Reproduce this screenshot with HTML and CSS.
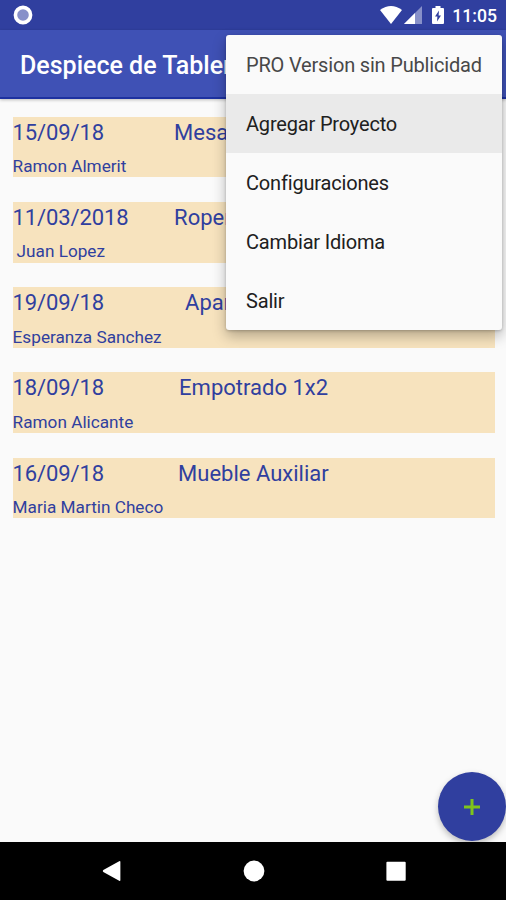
FILE: index.html
```html
<!DOCTYPE html>
<html lang="es">
<head>
<meta charset="utf-8">
<title>Despiece de Tableros</title>
<link rel="stylesheet" href="styles.css">
</head>
<body>
<div class="screen">
  <header class="status-bar">
    <svg class="sync" viewBox="0 0 20 20"><circle cx="10" cy="10" r="7.6" fill="#8790c9" stroke="#fff" stroke-width="3.6"/></svg>
    <div class="indicators">
      <svg class="wifi" viewBox="0 0 22 18"><path d="M0 4Q11-4 22 4L11 18Z" fill="#fff"/></svg>
      <svg class="signal" viewBox="0 0 18 18"><path d="M0 18L18 0V18Z" fill="#8790c9"/><path d="M0 18L11 7V18Z" fill="#fff"/></svg>
      <svg class="battery" viewBox="0 0 12 18"><path d="M3.5 2V0h5v2H11q1 0 1 1v14q0 1-1 1H1q-1 0-1-1V3q0-1 1-1Z" fill="#fff"/><path d="M7 4.5L3 10.6h2.4L5 15.5l4-6H6.6Z" fill="#303f9f"/></svg>
      <span class="clock">11:05</span>
    </div>
  </header>
  <div class="app-bar"><h1>Despiece de Tabler</h1></div>
  <main class="projects">
    <article class="project"><div class="row"><span class="date">15/09/18</span><span class="name name-mesa">Mesa</span></div><p class="client">Ramon Almerit</p></article>
    <article class="project"><div class="row"><span class="date">11/03/2018</span><span class="name name-ropero">Roper</span></div><p class="client indented">Juan Lopez</p></article>
    <article class="project"><div class="row"><span class="date">19/09/18</span><span class="name name-aparador">Apar</span></div><p class="client">Esperanza Sanchez</p></article>
    <article class="project"><div class="row"><span class="date">18/09/18</span><span class="name name-empotrado">Empotrado 1x2</span></div><p class="client">Ramon Alicante</p></article>
    <article class="project"><div class="row"><span class="date">16/09/18</span><span class="name name-mueble">Mueble Auxiliar</span></div><p class="client">Maria Martin Checo</p></article>
  </main>
  <nav class="nav-bar">
    <svg viewBox="0 0 22 22"><path d="M18.2 1.2Q19.4.6 19.4 2V20Q19.4 21.4 18.2 20.8L2.3 11.9Q1.2 11 2.3 10.1Z" fill="#fff"/></svg>
    <svg viewBox="0 0 22 22"><circle cx="11" cy="11" r="10.4" fill="#fff"/></svg>
    <svg viewBox="0 0 22 22"><rect x="1.4" y="1.7" width="19.3" height="19" rx="1" fill="#fff"/></svg>
  </nav>
  <button class="fab" aria-label="Agregar"><svg viewBox="0 0 16 16"><path d="M8 0V16M0 8H16" stroke="#7fc51c" stroke-width="3"/></svg></button>
  <ul class="menu">
    <li class="pro">PRO Version sin Publicidad</li>
    <li class="active">Agregar Proyecto</li>
    <li>Configuraciones</li>
    <li>Cambiar Idioma</li>
    <li>Salir</li>
  </ul>
</div>
</body>
</html>
```
FILE: styles.css
```css
* { box-sizing: border-box; }
body { margin: 0; font-family: Roboto, sans-serif; }
h1, p, ul { margin: 0; padding: 0; }
.screen {
  position: relative;
  display: flex;
  flex-direction: column;
  width: 506px;
  height: 900px;
  overflow: hidden;
  background: #fafafa;
}
.status-bar {
  display: flex;
  align-items: center;
  justify-content: space-between;
  height: 30px;
  padding: 0 9px 0 13px;
  background: #303f9f;
}
.sync { width: 20px; height: 20px; }
.indicators { display: flex; align-items: center; }
.wifi { width: 22px; height: 18px; margin-right: 2px; }
.signal { width: 18px; height: 18px; margin-right: 10px; }
.battery { width: 12px; height: 18px; margin-right: 8px; }
.clock { padding-top: 2px; color: #fff; font-size: 17.6px; font-weight: 500; line-height: 24px; }
.app-bar {
  display: flex;
  align-items: center;
  height: 69px;
  padding: 4px 0 0 20px;
  background: #3f51b5;
  border-bottom: 2px solid #1d31a0;
  box-shadow: 0 1px 3px rgba(0, 0, 0, .25);
}
.app-bar h1 { color: #fff; font-size: 25px; font-weight: 500; line-height: 32px; white-space: nowrap; }
.projects {
  display: flex;
  flex: 1;
  flex-direction: column;
  gap: 24.6px;
  padding: 17.6px 11.5px 0 12.6px;
}
.project { height: 60.7px; background: #f7e3be; color: #303f9f; }
.row { display: flex; height: 32px; font-size: 22px; line-height: 31px; }
.date { flex: none; width: 140.5px; letter-spacing: -.12px; }
.name { white-space: nowrap; }
.name-mesa, .name-ropero { margin-left: 21px; }
.name-aparador { margin-left: 32px; }
.name-empotrado { margin-left: 26px; }
.name-mueble { margin-left: 25px; }
.client { padding-top: 6.4px; font-size: 17.2px; line-height: 22px; }
.indented { padding-left: 4px; }
.nav-bar {
  display: flex;
  align-items: center;
  justify-content: center;
  gap: 120px;
  height: 58px;
  padding-left: 1px;
  background: #000;
}
.nav-bar svg { width: 22px; height: 22px; }
.fab {
  position: absolute;
  top: 772px;
  right: 0;
  display: flex;
  align-items: center;
  justify-content: center;
  width: 68px;
  height: 69px;
  padding: 0;
  border: 0;
  border-radius: 50%;
  background: #303f9f;
  box-shadow: 0 3px 6px rgba(0, 0, 0, .25);
}
.fab svg { width: 16px; height: 16px; }
.menu {
  position: absolute;
  top: 34.5px;
  left: 226px;
  width: 276px;
  overflow: hidden;
  border-radius: 3px;
  background: #fafafa;
  box-shadow: 0 6px 14px rgba(0, 0, 0, .28), 0 1px 3px rgba(0, 0, 0, .2);
  list-style: none;
}
.menu li { height: 59px; padding-left: 20px; color: #202020; font-size: 20px; line-height: 60px; letter-spacing: -.18px; white-space: nowrap; }
.menu .pro { color: #484848; }
.menu .active { background: #eaeaea; }
```
